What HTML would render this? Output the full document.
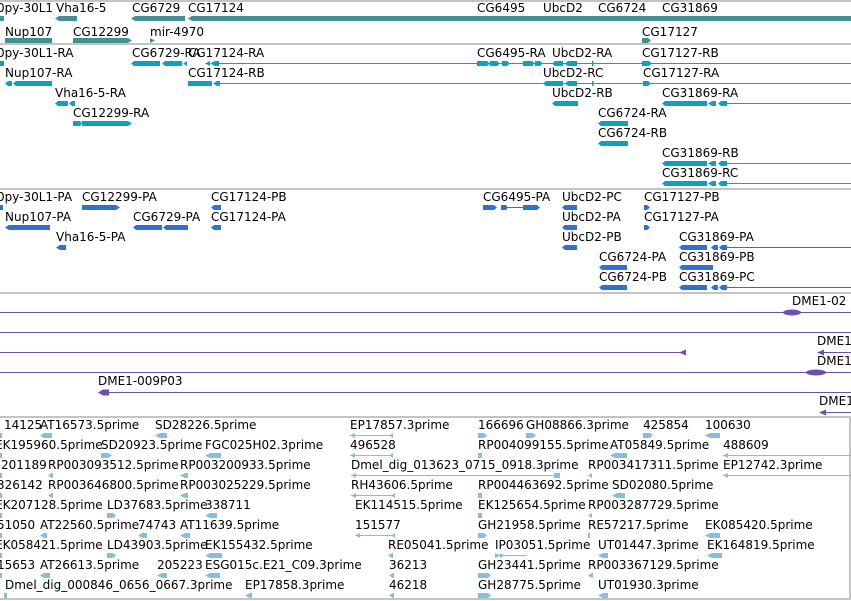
<!DOCTYPE html>
<html><head><meta charset="utf-8"><style>
html,body{margin:0;padding:0;background:#fff;width:851px;height:601px;overflow:hidden}
svg{display:block}
text{font-family:"DejaVu Sans","Liberation Sans",sans-serif;font-size:12px;fill:#000}
.g{fill:#448f94}.m{fill:#0fa0c0}.p{fill:#3070d0}.d{fill:#6e52aa}.e{fill:#86bde0}
.ml{stroke:#0fa0c0}.pl{stroke:#3070d0}.dl{stroke:#6e52aa}.el{stroke:#86bde0}
.sep{stroke:#c4c4c4;stroke-width:2}
</style></head><body>
<svg width="851" height="601" viewBox="0 0 851 601" xmlns="http://www.w3.org/2000/svg">
<!-- separators -->
<line class="sep" x1="0" y1="1" x2="851" y2="1"/>
<line class="sep" x1="0" y1="44" x2="851" y2="44"/>
<line class="sep" x1="0" y1="189" x2="851" y2="189"/>
<line class="sep" x1="0" y1="293" x2="851" y2="293"/>
<line class="sep" x1="0" y1="417" x2="851" y2="417"/>
<line class="sep" x1="0" y1="599" x2="851" y2="599"/>
<line class="sep" x1="850" y1="417" x2="850" y2="599"/>

<!-- GENE TRACK -->
<text x="-3" y="12">0py-30L1</text><text x="56" y="12">Vha16-5</text><text x="132" y="12">CG6729</text><text x="188" y="12">CG17124</text>
<text x="477" y="12">CG6495</text><text x="543" y="12">UbcD2</text><text x="598" y="12">CG6724</text><text x="662" y="12">CG31869</text>
<rect class="g" x="0" y="16" width="4" height="5"/>
<polygon class="g" points="55,18.5 59,16 77,16 77,21 59,21"/>
<polygon class="g" points="131,18.5 135,16 185,16 185,21 135,21"/>
<polygon class="g" points="188,18.5 192,16 851,16 851,21 192,21"/>
<rect class="g" x="477" y="16" width="64" height="5"/>
<rect class="g" x="544" y="16" width="49" height="5"/>
<polygon class="g" points="598,18.5 602,16 628,16 628,21 602,21"/>
<polygon class="g" points="662,18.5 666,16 851,16 851,21 666,21"/>
<text x="5" y="36">Nup107</text><text x="73" y="36">CG12299</text><text x="150" y="36">mir-4970</text><text x="642" y="36">CG17127</text>
<rect class="g" x="5" y="38" width="47" height="5"/>
<polygon class="g" points="73,38 128,38 132,40.5 128,43 73,43"/>
<polygon class="g" points="150,38 155,40.5 150,43"/>
<polygon class="g" points="642,38 648,38 651,40.5 648,43 642,43"/>

<!-- mRNA TRACK -->
<text x="-3" y="57">0py-30L1-RA</text><text x="132" y="57">CG6729-RA</text><text x="188" y="57">CG17124-RA</text>
<text x="477" y="57">CG6495-RA</text><text x="552" y="57">UbcD2-RA</text><text x="642" y="57">CG17127-RB</text>
<rect class="m" x="0" y="61" width="4" height="5"/>
<polygon class="m" points="131,63.5 134,61 160,61 160,66 134,66"/>
<polygon class="m" points="162,63.5 165,61 182,61 182,66 165,66"/>
<polygon class="m" points="183,63.5 187,61 187,66"/>
<polygon class="m" points="205,63.5 210,61 210,66"/><polygon class="m" points="210,63.5 215,61 219,61 219,66 215,66"/>
<line class="ml" x1="219" y1="63.5" x2="851" y2="63.5"/>
<polygon class="m" points="477,61 487,61 490,63.5 487,66 477,66"/><polygon class="m" points="490,61 497,61 500,63.5 497,66 490,66"/><polygon class="m" points="502,61 507,61 510,63.5 507,66 502,66"/>
<line class="ml" x1="510" y1="63.5" x2="523" y2="63.5"/>
<polygon class="m" points="523,61 532,61 535,63.5 532,66 523,66"/><polygon class="m" points="535,61 540,61 543,63.5 540,66 535,66"/>
<polygon class="m" points="552,63.5 555,61 563,61 563,66 555,66"/><polygon class="m" points="565,63.5 568,61 577,61 577,66 568,66"/>
<line class="ml" x1="577" y1="63.5" x2="593" y2="63.5"/><rect class="m" x="592" y="61" width="1.5" height="5"/>
<polygon class="m" points="642,61 649,61 652,63.5 649,66 642,66"/>

<text x="5" y="77">Nup107-RA</text><text x="188" y="77">CG17124-RB</text><text x="543" y="77">UbcD2-RC</text><text x="643" y="77">CG17127-RA</text>
<polygon class="m" points="5,83.5 8,81 12,81 12,86 8,86"/><polygon class="m" points="13,83.5 16,81 52,81 52,86 16,86"/>
<rect class="m" x="188" y="81" width="24" height="5"/><polygon class="m" points="213,83.5 217,81 220,81 220,86 217,86"/>
<line class="ml" x1="220" y1="83.5" x2="851" y2="83.5"/>
<polygon class="m" points="543,83.5 546,81 563,81 563,86 546,86"/><polygon class="m" points="565,83.5 568,81 577,81 577,86 568,86"/>
<line class="ml" x1="577" y1="83.5" x2="593" y2="83.5"/><rect class="m" x="592" y="81" width="1.5" height="5"/>
<polygon class="m" points="643,81 648,81 651,83.5 648,86 643,86"/>

<text x="55" y="97">Vha16-5-RA</text><text x="552" y="97">UbcD2-RB</text><text x="662" y="97">CG31869-RA</text>
<polygon class="m" points="55,103.5 58,101 68,101 68,106 58,106"/><polygon class="m" points="69,103.5 72,101 75,101 75,106 72,106"/>
<polygon class="m" points="552,103.5 555,101 578,101 578,106 555,106"/>
<polygon class="m" points="662,103.5 665,101 707,101 707,106 665,106"/><polygon class="m" points="708,103.5 712,101 716,101 716,106 712,106"/><polygon class="m" points="718,103.5 721,101 727,101 727,106 721,106"/>
<line class="ml" x1="727" y1="103.5" x2="851" y2="103.5"/>

<text x="73" y="117">CG12299-RA</text><text x="598" y="117">CG6724-RA</text>
<polygon class="m" points="73,121 80,121 82,123.5 80,126 73,126"/><polygon class="m" points="82,121 128,121 132,123.5 128,126 82,126"/>
<polygon class="m" points="598,123.5 601,121 628,121 628,126 601,126"/>
<text x="598" y="137">CG6724-RB</text>
<polygon class="m" points="598,143.5 601,141 628,141 628,146 601,146"/>
<text x="662" y="157">CG31869-RB</text>
<polygon class="m" points="662,163.5 665,161 707,161 707,166 665,166"/><polygon class="m" points="708,163.5 712,161 716,161 716,166 712,166"/><polygon class="m" points="718,163.5 721,161 727,161 727,166 721,166"/>
<line class="ml" x1="727" y1="163.5" x2="851" y2="163.5"/>
<text x="662" y="177">CG31869-RC</text>
<polygon class="m" points="662,183.5 665,181 707,181 707,186 665,186"/><polygon class="m" points="708,183.5 712,181 716,181 716,186 712,186"/><polygon class="m" points="718,183.5 721,181 727,181 727,186 721,186"/>
<line class="ml" x1="727" y1="183.5" x2="851" y2="183.5"/>

<!-- PROTEIN TRACK -->
<text x="-3" y="201">0py-30L1-PA</text><text x="82" y="201">CG12299-PA</text><text x="211" y="201">CG17124-PB</text>
<text x="483" y="201">CG6495-PA</text><text x="562" y="201">UbcD2-PC</text><text x="644" y="201">CG17127-PB</text>
<rect class="p" x="0" y="205" width="3" height="5"/>
<polygon class="p" points="82,205 116,205 120,207.5 116,210 82,210"/>
<polygon class="p" points="211,207.5 214,205 221,205 221,210 214,210"/>
<polygon class="p" points="483,205 494,205 497,207.5 494,210 483,210"/><polygon class="p" points="501,205 506,205 508,207.5 506,210 501,210"/>
<line class="pl" x1="508" y1="207.5" x2="523" y2="207.5"/><polygon class="p" points="523,205 537,205 540,207.5 537,210 523,210"/>
<polygon class="p" points="562,207.5 565,205 577,205 577,210 565,210"/>
<polygon class="p" points="644,205 647,205 650,207.5 647,210 644,210"/>

<text x="5" y="221">Nup107-PA</text><text x="133" y="221">CG6729-PA</text><text x="211" y="221">CG17124-PA</text><text x="562" y="221">UbcD2-PA</text><text x="644" y="221">CG17127-PA</text>
<polygon class="p" points="5,227.5 9,225 50,225 50,230 9,230"/>
<polygon class="p" points="133,227.5 136,225 162,225 162,230 136,230"/><polygon class="p" points="163,227.5 166,225 188,225 188,230 166,230"/>
<polygon class="p" points="211,227.5 214,225 221,225 221,230 214,230"/>
<polygon class="p" points="562,227.5 565,225 577,225 577,230 565,230"/>
<polygon class="p" points="644,225 647,225 650,227.5 647,230 644,230"/>

<text x="56" y="241">Vha16-5-PA</text><text x="562" y="241">UbcD2-PB</text><text x="679" y="241">CG31869-PA</text>
<polygon class="p" points="56,247.5 60,245 66,245 66,250 60,250"/>
<polygon class="p" points="562,247.5 565,245 577,245 577,250 565,250"/>
<polygon class="p" points="679,247.5 682,245 707,245 707,250 682,250"/><polygon class="p" points="711,247.5 714,245 718,245 718,250 714,250"/><polygon class="p" points="719,247.5 722,245 727,245 727,250 722,250"/>
<line class="pl" x1="727" y1="247.5" x2="851" y2="247.5"/>
<text x="599" y="261">CG6724-PA</text><text x="679" y="261">CG31869-PB</text>
<polygon class="p" points="599,267.5 602,265 627,265 627,270 602,270"/>
<polygon class="p" points="679,267.5 682,265 713,265 713,270 682,270"/>
<text x="599" y="281">CG6724-PB</text><text x="679" y="281">CG31869-PC</text>
<polygon class="p" points="599,287.5 602,285 627,285 627,290 602,290"/>
<polygon class="p" points="679,287.5 682,285 707,285 707,290 682,290"/><polygon class="p" points="711,287.5 714,285 718,285 718,290 714,290"/><polygon class="p" points="719,287.5 722,285 727,285 727,290 722,290"/>
<line class="pl" x1="727" y1="287.5" x2="851" y2="287.5"/>

<!-- DME TRACK -->
<text x="792" y="305">DME1-02</text>
<line class="dl" x1="0" y1="312.5" x2="851" y2="312.5"/>
<ellipse class="d" cx="792" cy="312.5" rx="9" ry="3"/>
<line class="dl" x1="0" y1="332.5" x2="851" y2="332.5"/>
<text x="817" y="345">DME1</text>
<line class="dl" x1="0" y1="352.5" x2="686" y2="352.5"/>
<polygon class="d" points="679,352.5 686,349.5 686,355.5"/>
<line class="dl" x1="818" y1="352.5" x2="851" y2="352.5"/>
<polygon class="d" points="817,352.5 824,349.5 824,355.5"/>
<text x="817" y="365">DME1</text>
<line class="dl" x1="0" y1="372.5" x2="851" y2="372.5"/>
<ellipse class="d" cx="816" cy="372.5" rx="10" ry="3"/>
<text x="98" y="385">DME1-009P03</text>
<line class="dl" x1="100" y1="392.5" x2="851" y2="392.5"/>
<polygon class="d" points="98,392.5 103,389.5 109,389.5 109,395.5 103,395.5"/>
<text x="819" y="405">DME1</text>
<line class="dl" x1="820" y1="412.5" x2="851" y2="412.5"/>
<polygon class="d" points="819,412.5 826,409.5 826,415.5"/>

<!-- EST TRACK -->
<g>
<text x="4" y="429">14125</text><text x="40" y="429">AT16573.5prime</text><text x="155" y="429">SD28226.5prime</text><text x="350" y="429">EP17857.3prime</text><text x="478" y="429">166696</text><text x="526" y="429">GH08866.3prime</text><text x="643" y="429">425854</text><text x="705" y="429">100630</text>
<text x="-5" y="449">EK195960.5prime</text><text x="101" y="449">SD20923.5prime</text><text x="205" y="449">FGC025H02.3prime</text><text x="350" y="449">496528</text><text x="478" y="449">RP004099155.5prime</text><text x="610" y="449">AT05849.5prime</text><text x="723" y="449">488609</text>
<text x="1" y="469">201189</text><text x="48" y="469">RP003093512.5prime</text><text x="180" y="469">RP003200933.5prime</text><text x="351" y="469">Dmel_dig_013623_0715_0918.3prime</text><text x="588" y="469">RP003417311.5prime</text><text x="723" y="469">EP12742.3prime</text>
<text x="-3" y="489">326142</text><text x="48" y="489">RP003646800.5prime</text><text x="180" y="489">RP003025229.5prime</text><text x="351" y="489">RH43606.5prime</text><text x="478" y="489">RP004463692.5prime</text><text x="612" y="489">SD02080.5prime</text>
<text x="-5" y="509">EK207128.5prime</text><text x="107" y="509">LD37683.5prime</text><text x="205" y="509">338711</text><text x="355" y="509">EK114515.5prime</text><text x="478" y="509">EK125654.5prime</text><text x="588" y="509">RP003287729.5prime</text>
<text x="-3" y="529">51050</text><text x="40" y="529">AT22560.5prime</text><text x="138" y="529">74743</text><text x="180" y="529">AT11639.5prime</text><text x="355" y="529">151577</text><text x="478" y="529">GH21958.5prime</text><text x="588" y="529">RE57217.5prime</text><text x="705" y="529">EK085420.5prime</text>
<text x="-5" y="549">EK058421.5prime</text><text x="107" y="549">LD43903.5prime</text><text x="205" y="549">EK155432.5prime</text><text x="388" y="549">RE05041.5prime</text><text x="495" y="549">IP03051.5prime</text><text x="598" y="549">UT01447.3prime</text><text x="707" y="549">EK164819.5prime</text>
<text x="-3" y="569">15653</text><text x="40" y="569">AT26613.5prime</text><text x="157" y="569">205223</text><text x="205" y="569">ESG015c.E21_C09.3prime</text><text x="389" y="569">36213</text><text x="478" y="569">GH23441.5prime</text><text x="588" y="569">RP003367129.5prime</text>
<text x="5" y="589">Dmel_dig_000846_0656_0667.3prime</text><text x="245" y="589">EP17858.3prime</text><text x="389" y="589">46218</text><text x="478" y="589">GH28775.5prime</text><text x="598" y="589">UT01930.3prime</text>
</g>
<g class="e">
<!-- row 429 bars y 433 -->
<rect x="0" y="433" width="2" height="5"/><polygon points="40,435.5 44,433 52,433 52,438 44,438"/><polygon points="155,435.5 160,433 167,433 167,438 160,438"/>
<polygon points="478,433 484,433 487,435.5 484,438 478,438"/><polygon points="526,433 533,433 536,435.5 533,438 526,438"/>
<polygon points="643,433 650,433 653,435.5 650,438 643,438"/><polygon points="705,435.5 710,433 720,433 720,438 710,438"/>
<!-- 449 -->
<rect x="0" y="453" width="2" height="5"/><polygon points="101,453 108,453 112,455.5 108,458 101,458"/><polygon points="205,455.5 210,453 221,453 221,458 210,458"/>
<rect x="478" y="453" width="4" height="5"/><polygon points="610,455.5 615,453 627,453 627,458 615,458"/>
<!-- 469 -->
<rect x="0" y="473" width="2" height="5"/><polygon points="48,475.5 52,473 53,473 53,478 52,478"/><polygon points="180,475.5 185,473 188,473 188,478 185,478"/><polygon points="588,475.5 592,473 592,478"/>
<!-- 489 -->
<rect x="0" y="493" width="2" height="5"/><polygon points="48,495.5 52,493 53,493 53,498 52,498"/><polygon points="180,495.5 185,493 188,493 188,498 185,498"/><rect x="478" y="493" width="4" height="5"/><polygon points="612,495.5 617,493 625,493 625,498 617,498"/>
<!-- 509 -->
<rect x="0" y="513" width="2" height="5"/><polygon points="107,513 113,513 116,515.5 113,518 107,518"/><polygon points="205,515.5 210,513 217,513 217,518 210,518"/><rect x="478" y="513" width="4" height="5"/><polygon points="588,515.5 592,513 592,518"/>
<!-- 529 -->
<rect x="0" y="533" width="2" height="5"/><polygon points="40,535.5 44,533 47,533 47,538 44,538"/><polygon points="138,535.5 142,533 147,533 147,538 142,538"/><polygon points="180,535.5 185,533 190,533 190,538 185,538"/>
<polygon points="478,533 484,533 487,535.5 484,538 478,538"/><rect x="588" y="533" width="2" height="5"/><polygon points="705,535.5 710,533 720,533 720,538 710,538"/>
<!-- 549 -->
<rect x="0" y="553" width="2" height="5"/><polygon points="107,553 113,553 116,555.5 113,558 107,558"/><polygon points="205,555.5 210,553 222,553 222,558 210,558"/><polygon points="388,555.5 392,553 393,553 393,558 392,558"/>
<polygon points="598,555.5 603,553 608,553 608,558 603,558"/><polygon points="707,555.5 712,553 722,553 722,558 712,558"/>
<!-- 569 -->
<rect x="0" y="573" width="2" height="5"/><polygon points="40,575.5 44,573 50,573 50,578 44,578"/><polygon points="157,575.5 162,573 167,573 167,578 162,578"/><polygon points="205,575.5 210,573 220,573 220,578 210,578"/>
<polygon points="389,575.5 393,573 394,573 394,578 393,578"/><polygon points="478,573 488,573 491,575.5 488,578 478,578"/><polygon points="588,575.5 592,573 593,573 593,578 592,578"/>
<!-- 589 -->
<rect x="4" y="593" width="3" height="5"/><polygon points="245,595.5 250,593 252,593 252,598 250,598"/><polygon points="389,595.5 393,593 394,593 394,598 393,598"/><polygon points="478,593 488,593 491,595.5 488,598 478,598"/><polygon points="598,595.5 603,593 608,593 608,598 603,598"/>
<!-- arrow tips for lines -->
<polygon points="350,435.5 355,433 355,438"/><polygon points="393,433 393,438 389,435.5"/>
<polygon points="350,455.5 355,453 355,458"/><polygon points="393,453 393,458 389,455.5"/>
<polygon points="351,475.5 356,473 356,478"/><polygon points="560,473 560,478 554,478 554,473"/>
<polygon points="351,495.5 356,493 356,498"/><polygon points="395,493 395,498 391,495.5"/>
<polygon points="355,535.5 360,533 360,538"/><polygon points="395,533 395,538 391,535.5"/>
<polygon points="495,553 500,555.5 495,558"/><polygon points="500,553 505,555.5 500,558"/>
<polygon points="723,455.5 728,453 728,458"/><polygon points="723,475.5 728,473 728,478"/>
</g>
<g class="el" stroke-width="1">
<line x1="350" y1="435.5" x2="393" y2="435.5"/><line x1="350" y1="455.5" x2="393" y2="455.5"/>
<line x1="351" y1="475.5" x2="560" y2="475.5"/><line x1="351" y1="495.5" x2="395" y2="495.5"/>
<line x1="355" y1="535.5" x2="395" y2="535.5"/><line x1="495" y1="555.5" x2="527" y2="555.5"/>
<line x1="723" y1="455.5" x2="851" y2="455.5"/><line x1="723" y1="475.5" x2="851" y2="475.5"/>
</g>
</svg>
</body></html>
